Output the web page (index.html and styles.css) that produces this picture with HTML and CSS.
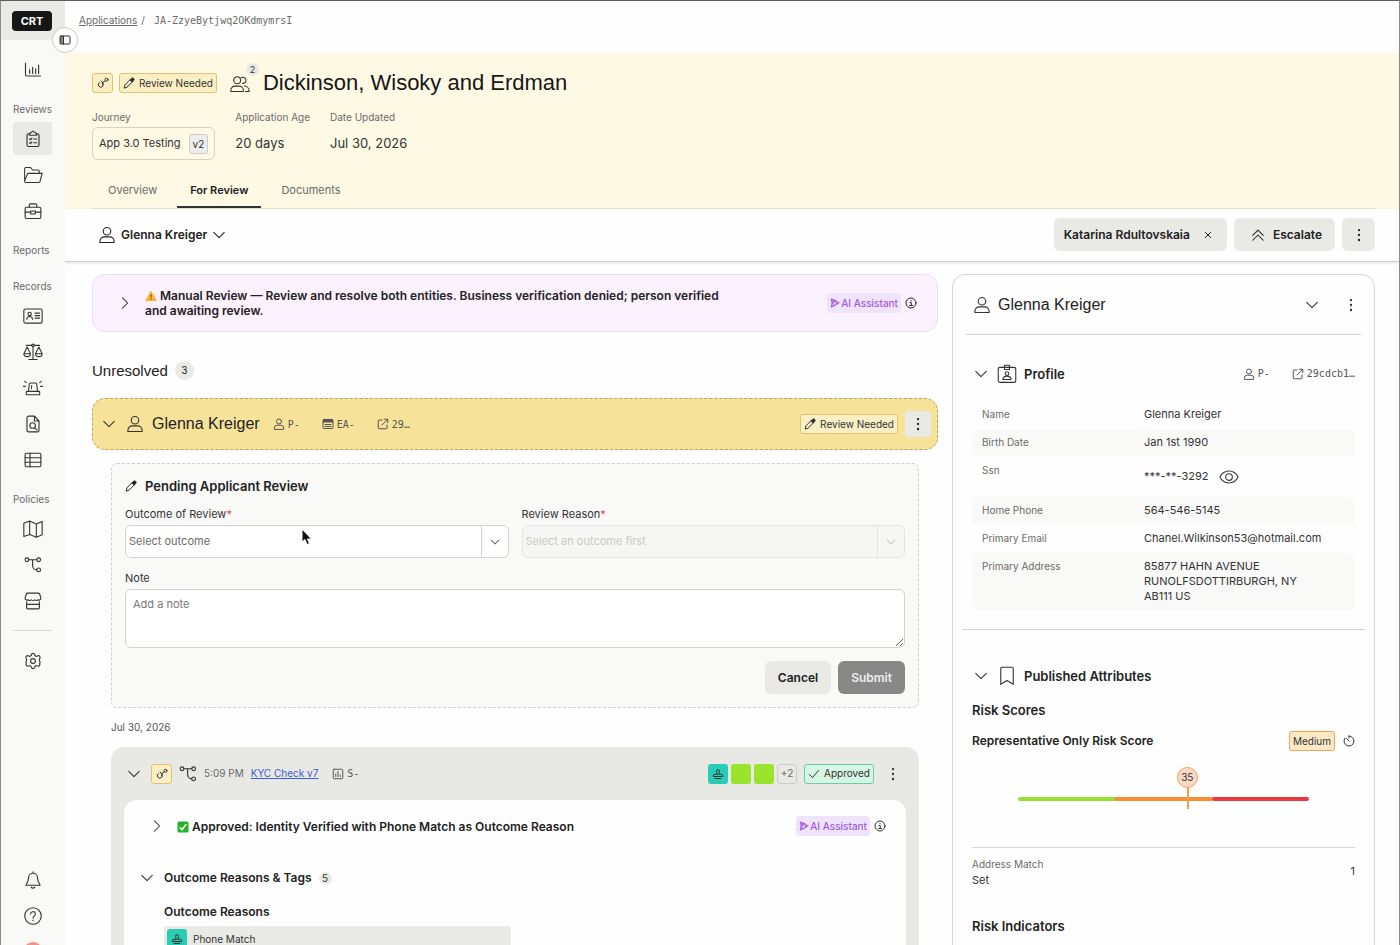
FILE: index.html
```html
<!DOCTYPE html>
<html lang="en">
<head>
  <meta charset="UTF-8" />
  <meta name="viewport" content="width=device-width, initial-scale=1.0"/>
  <title>Dickinson, Wisoky and Erdman</title>
  <link rel="stylesheet" href="styles.css">
</head>
<body>
  <!-- icon sprite -->
  <svg class="sprite" aria-hidden="true">
    <symbol id="i-chart" viewBox="0 0 24 24"><path d="M2 3v15a2 2 0 0 0 2 2h18M7.500 16.500v-5M11.500 16.500v-8M15.500 16.500v-6M19.500 16.500v-11"/></symbol>
    <symbol id="i-clipboard" viewBox="0 0 24 24"><path d="M8 5H6a2 2 0 0 0-2 2v13a2 2 0 0 0 2 2h12a2 2 0 0 0 2-2V7a2 2 0 0 0-2-2h-2M7 7V5l5-3.500L17 5v2zM7.500 12l1 1 2-2M13 12h4M7.500 17l1 1 2-2M13 17h4"/></symbol>
    <symbol id="i-folder" viewBox="0 0 24 24"><path d="M2 19V4.500A1.500 1.500 0 0 1 3.500 3H9l2.500 3H18a1.500 1.500 0 0 1 1.500 1.500V10M2 19l3-7.500A2 2 0 0 1 6.500 10H23l-2.500 9.500a2 2 0 0 1-1.500 1.500H3.500A1.500 1.500 0 0 1 2 19z"/></symbol>
    <symbol id="i-briefcase" viewBox="0 0 24 24"><rect x="1.500" y="7" width="21" height="15" rx="2"/><path d="M7 7V4a1.500 1.500 0 0 1 1.500-1.500h7A1.500 1.500 0 0 1 17 4v3M1.500 13.500H9M15 13.500h7.500M9 12h6v4H9z"/></symbol>
    <symbol id="i-idcard" viewBox="0 0 24 24"><rect x="1" y="3.500" width="22" height="17" rx="2"/><circle cx="8" cy="9.500" r="2"/><path d="M4.500 16c.3-2.500 1.500-3.500 3.500-3.500s3.200 1 3.500 3.500M14.500 8.500H20M14.500 11.500H20M14.500 14.500H20"/></symbol>
    <symbol id="i-scale" viewBox="0 0 24 24"><circle cx="12" cy="4" r="1.500"/><path d="M12 5.500V20.500M7 21h10M4 4h6.500M13.500 4H20M5 6L1 14h8zM19 6l-4 8h8zM1 14a4 3.500 0 0 0 8 0M15 14a4 3.500 0 0 0 8 0"/></symbol>
    <symbol id="i-siren" viewBox="0 0 24 24"><path d="M6.500 16l1-8.500A1.500 1.500 0 0 1 9 6h6a1.500 1.500 0 0 1 1.500 1.500l1 8.500M10.500 9L10 13M5 16h14a1 1 0 0 1 1 1v3H4v-3a1 1 0 0 1 1-1zM.500 10H3M21 10h2.500M2 4l2 1.500M22 4l-2 1.500"/></symbol>
    <symbol id="i-filesearch" viewBox="0 0 24 24"><path d="M14 1.500H6a2 2 0 0 0-2 2v17a2 2 0 0 0 2 2h12a2 2 0 0 0 2-2V8zM14 1.500V8h6M14.200 17.200L17.500 20"/><circle cx="11.500" cy="14" r="3.700"/></symbol>
    <symbol id="i-table" viewBox="0 0 24 24"><rect x="1.500" y="3" width="21" height="18" rx="2"/><path d="M1.500 9h21M1.500 15h21M8 3v18"/></symbol>
    <symbol id="i-map" viewBox="0 0 24 24"><path d="M1 5l7-2.500L16 6l7-3v16l-7 3-8-3.500L1 21zM8 2.500v16M16 6v16"/></symbol>
    <symbol id="i-graph" viewBox="0 0 24 24"><circle cx="4" cy="5" r="2.500"/><circle cx="19.500" cy="5" r="2.500"/><circle cx="19.500" cy="18.500" r="2.500"/><path d="M6.500 5H17M11.500 5v8a5.500 5.500 0 0 0 5.500 5.500"/></symbol>
    <symbol id="i-store" viewBox="0 0 24 24"><path d="M5 1.500h14a2 2 0 0 1 1.800 1.200L22.500 7.500V9a3 3 0 0 1-4 1.500 3.500 3.500 0 0 1-4.300 0 3.500 3.500 0 0 1-4.400 0 3.500 3.500 0 0 1-4.300 0 3 3 0 0 1-4-1.500V7.500L3.200 2.700A2 2 0 0 1 5 1.500zM3.500 13v8a1.500 1.500 0 0 0 1.500 1.500h14a1.500 1.500 0 0 0 1.500-1.500v-8M3.500 16.500h17"/></symbol>
    <symbol id="i-gear" viewBox="0 0 24 24"><circle cx="12" cy="12" r="3.200"/><path d="M9.800 3.500a2.300 2.300 0 0 1 4.400 0 2.300 2.300 0 0 0 3.400 2 2.300 2.300 0 0 1 3.300 3.200c-.8 1.300-.8 1.700 0 3.300.9 1.800.8 2.300 0 3.500a2.300 2.300 0 0 1-3.300 3 2.300 2.300 0 0 0-3.400 2 2.300 2.300 0 0 1-4.400 0 2.300 2.300 0 0 0-3.400-2 2.300 2.300 0 0 1-3.300-3c-.8-1.200-.9-1.700 0-3.500.8-1.600.8-2 0-3.300a2.300 2.300 0 0 1 3.300-3.200 2.300 2.300 0 0 0 3.400-2z"/></symbol>
    <symbol id="i-bell" viewBox="0 0 24 24"><path d="M12 1v2M12 3a6 6 0 0 0-6 6c0 5-1.200 6.500-3.500 10h19c-2.300-3.500-3.500-5-3.500-10a6 6 0 0 0-6-6zM9.500 21.500a3 3 0 0 0 5 0"/></symbol>
    <symbol id="i-help" viewBox="0 0 24 24"><circle cx="12" cy="12" r="11"/><path d="M8.800 9.500a3.200 3.200 0 1 1 4.700 2.800c-1 .6-1.500 1-1.500 2.200M12 17.300v.600"/></symbol>
    <symbol id="i-panel" viewBox="0 0 24 24"><rect x="2" y="4" width="20" height="16" rx="2"/><path d="M9 4v16"/><path class="fill" d="M2 4h7v16H2z" fill-opacity=".6"/></symbol>
    <symbol id="i-user" viewBox="0 0 24 24"><circle cx="12" cy="7" r="5"/><path d="M2.500 22v-1.500a6 6 0 0 1 6-6h7a6 6 0 0 1 6 6V22z"/></symbol>
    <symbol id="i-users" viewBox="0 0 24 24"><circle cx="8.500" cy="7.500" r="4.200"/><path d="M1 21v-1.500a5 5 0 0 1 5-5h5a5 5 0 0 1 5 5V21zM13.500 4.500a3.700 3.700 0 1 1 1.500 6.800M17 14.500a6 6 0 0 1 6 5.500v1h-4.500"/></symbol>
    <symbol id="i-down" viewBox="0 0 24 24"><path d="M3 7.500l9 9 9-9"/></symbol>
    <symbol id="i-right" viewBox="0 0 24 24"><path d="M7.500 3l9 9-9 9"/></symbol>
    <symbol id="i-up2" viewBox="0 0 24 24"><path d="M3 12.500l9-9 9 9M3 21l9-9 9 9"/></symbol>
    <symbol id="i-dots" viewBox="0 0 24 24"><g class="fill"><circle cx="12" cy="3.500" r="2"/><circle cx="12" cy="12" r="2"/><circle cx="12" cy="20.500" r="2"/></g></symbol>
    <symbol id="i-x" viewBox="0 0 24 24"><path d="M4 4l16 16M20 4L4 20"/></symbol>
    <symbol id="i-pencil" viewBox="0 0 24 24"><path d="M2.500 21.500l1.500-6L15.500 4l4.500 4.500L8.500 20z"/><path class="fill" d="M13 6l4.500-4.500a2 2 0 0 1 3 0l2 2a2 2 0 0 1 0 3L18 11z"/></symbol>
    <symbol id="i-link" viewBox="0 0 24 24"><path d="M11 11.500a5 5 0 1 1-6-.5M11 11.500L16 8M8 8l4 3.500-.5 4"/><circle cx="19" cy="5.500" r="3"/></symbol>
    <symbol id="i-info" viewBox="0 0 24 24"><circle cx="12" cy="12" r="10"/><path d="M10 11h2.500v6M9.500 17h5.500M12 6.800v1"/></symbol>
    <symbol id="i-ai" viewBox="0 0 24 24"><path d="M3 2.500c6 1.500 13 4.500 18.500 9C16 15.500 9 20 3 21.500c2.500-6 2.500-13 0-19zM7.500 7v10.500M7 5.500l10 8"/></symbol>
    <symbol id="i-window" viewBox="0 0 24 24"><rect x="2" y="3" width="20" height="18" rx="2"/><path class="fill" d="M2 3h20v6H2z"/><path d="M6 13h12M6 17h12"/></symbol>
    <symbol id="i-external" viewBox="0 0 24 24"><path d="M10 4H4a1.500 1.500 0 0 0-1.500 1.500V20A1.500 1.500 0 0 0 4 21.500h14.500A1.500 1.500 0 0 0 20 20v-6M14.500 2.500h7v7M21.500 2.500L10 14"/></symbol>
    <symbol id="i-bars" viewBox="0 0 24 24"><rect x="2.500" y="2.500" width="19" height="19" rx="2"/><path d="M7.500 17v-5M12 17V7M16.500 17v-3"/></symbol>
    <symbol id="i-stamp" viewBox="0 0 24 24"><path d="M10.500 12.500c0-2-1.500-3.500-1.500-6a3 3 0 1 1 6 0c0 2.500-1.500 4-1.500 6h5a3 3 0 0 1 3 3V17h-19v-1.500a3 3 0 0 1 3-3zM6 21h12"/></symbol>
    <symbol id="i-check" viewBox="0 0 24 24"><path d="M3 13l6 6L21 5"/></symbol>
    <symbol id="i-eye" viewBox="0 0 24 24"><path d="M1 12c5-9.500 17-9.500 22 0-5 9.500-17 9.500-22 0z"/><circle cx="12" cy="12" r="4"/></symbol>
    <symbol id="i-badge" viewBox="0 0 24 24"><rect x="1.500" y="4" width="21" height="18" rx="2"/><path d="M9 6.500V1.500h6v5zM7 18.500c.3-3 2-4 5-4s4.700 1 5 4z"/><circle cx="12" cy="11.500" r="2.200"/></symbol>
    <symbol id="i-bookmark" viewBox="0 0 24 24"><path d="M4.500 22V3A1.500 1.500 0 0 1 6 1.500h12A1.500 1.500 0 0 1 19.500 3v19L12 17.500z"/></symbol>
    <symbol id="i-timer" viewBox="0 0 24 24"><path d="M12 2a10 10 0 1 1-8.500 4.700M12 2v4M7 7l5 5"/></symbol>
  </svg>

  <div class="app">
    <aside class="sidebar">
      <div class="brand"><span class="logo">CRT</span></div>
      <button class="collapse" aria-label="Toggle sidebar"><svg class="icon s12"><use href="#i-panel"/></svg></button>

      <nav class="nav">
        <section>
          <a href="#" aria-label="Dashboard"><svg class="icon s18"><use href="#i-chart"/></svg></a>
        </section>
        <section>
          <h2>Reviews</h2>
          <a href="#" class="active" aria-label="Applications"><svg class="icon s18"><use href="#i-clipboard"/></svg></a>
          <a href="#" aria-label="Cases"><svg class="icon s20"><use href="#i-folder"/></svg></a>
          <a href="#" aria-label="Portfolio"><svg class="icon s18"><use href="#i-briefcase"/></svg></a>
        </section>
        <section class="empty">
          <h2>Reports</h2>
        </section>
        <section>
          <h2>Records</h2>
          <a href="#" aria-label="Entities"><svg class="icon s20"><use href="#i-idcard"/></svg></a>
          <a href="#" aria-label="Decisions"><svg class="icon s20"><use href="#i-scale"/></svg></a>
          <a href="#" aria-label="Alerts"><svg class="icon s20"><use href="#i-siren"/></svg></a>
          <a href="#" aria-label="Searches"><svg class="icon s18"><use href="#i-filesearch"/></svg></a>
          <a href="#" aria-label="Lists"><svg class="icon s18"><use href="#i-table"/></svg></a>
        </section>
        <section>
          <h2>Policies</h2>
          <a href="#" aria-label="Journeys"><svg class="icon s20"><use href="#i-map"/></svg></a>
          <a href="#" aria-label="Workflows"><svg class="icon s18"><use href="#i-graph"/></svg></a>
          <a href="#" aria-label="Marketplace"><svg class="icon s18"><use href="#i-store"/></svg></a>
        </section>
        <hr>
        <section>
          <a href="#" aria-label="Settings"><svg class="icon s18"><use href="#i-gear"/></svg></a>
        </section>
        <section class="bottom">
          <a href="#" aria-label="Notifications"><svg class="icon s18"><use href="#i-bell"/></svg></a>
          <a href="#" aria-label="Help"><svg class="icon s18"><use href="#i-help"/></svg></a>
          <a href="#" aria-label="Account"><span class="avatar"></span></a>
        </section>
      </nav>
    </aside>

    <main class="main">
      <div class="breadcrumbs">
        <a href="#">Applications</a><span>/</span><span class="mono">JA-ZzyeBytjwq2OKdmymrsI</span>
      </div>

      <header class="banner">
        <div class="title-row">
          <span class="badge yellow square"><svg class="icon s12"><use href="#i-link"/></svg></span>
          <span class="badge yellow"><svg class="icon s12"><use href="#i-pencil"/></svg>Review Needed</span>
          <span class="people"><svg class="icon s20"><use href="#i-users"/></svg><span class="people-count">2</span></span>
          <h1>Dickinson, Wisoky and Erdman</h1>
        </div>
        <div class="facts">
          <div class="fact">
            <span class="fact-label">Journey</span>
            <div class="journey">App 3.0 Testing <span class="version">v2</span></div>
          </div>
          <div class="fact">
            <span class="fact-label">Application Age</span>
            <span class="fact-value">20 days</span>
          </div>
          <div class="fact">
            <span class="fact-label">Date Updated</span>
            <span class="fact-value">Jul 30, 2026</span>
          </div>
        </div>
        <nav class="tabs">
          <a href="#">Overview</a>
          <a href="#" class="active">For Review</a>
          <a href="#">Documents</a>
        </nav>
      </header>

      <div class="toolbar">
        <button class="person"><svg class="icon s18"><use href="#i-user"/></svg>Glenna Kreiger<svg class="icon s14"><use href="#i-down"/></svg></button>
        <div class="actions">
          <button class="btn assignee">Katarina Rdultovskaia <svg class="icon s8"><use href="#i-x"/></svg></button>
          <button class="btn escalate"><svg class="icon s14"><use href="#i-up2"/></svg>Escalate</button>
          <button class="btn icon-only" aria-label="More"><svg class="icon s14"><use href="#i-dots"/></svg></button>
        </div>
      </div>

      <div class="content">
        <div class="reviews">
          <div class="ai-card">
            <button class="plain" aria-label="Expand"><svg class="icon s14"><use href="#i-right"/></svg></button>
            <p><svg class="emoji" viewBox="0 0 24 24"><path d="M12 2L23 21.500H1z" fill="#fbb62c" stroke="#f0a020" stroke-linejoin="round"/><path d="M11 9h2l-.5 6h-1zM11 17h2v2h-2z" fill="#222"/></svg> Manual Review — Review and resolve both entities. Business verification denied; person verified and awaiting review.</p>
            <span class="ai-tag"><svg class="icon s10"><use href="#i-ai"/></svg>AI Assistant</span>
            <svg class="icon s12"><use href="#i-info"/></svg>
          </div>

          <h2 class="section-title">Unresolved <span class="count">3</span></h2>

          <div class="entity-bar">
            <button class="plain" aria-label="Collapse"><svg class="icon s14"><use href="#i-down"/></svg></button>
            <svg class="icon s18"><use href="#i-user"/></svg>
            <h3>Glenna Kreiger</h3>
            <div class="ids">
              <span><svg class="icon s12"><use href="#i-user"/></svg>P-</span>
              <span><svg class="icon s12"><use href="#i-window"/></svg>EA-</span>
              <span><svg class="icon s12"><use href="#i-external"/></svg>29…</span>
            </div>
            <span class="badge yellow"><svg class="icon s12"><use href="#i-pencil"/></svg>Review Needed</span>
            <button class="btn small" aria-label="More"><svg class="icon s14"><use href="#i-dots"/></svg></button>
          </div>

          <form class="review-form">
            <h4><svg class="icon s12"><use href="#i-pencil"/></svg>Pending Applicant Review</h4>
            <div class="fields">
              <div class="field">
                <label for="outcome">Outcome of Review<span class="required">*</span></label>
                <div class="select">
                  <select id="outcome"><option>Select outcome</option></select>
                  <span class="select-arrow"><svg class="icon s10"><use href="#i-down"/></svg></span>
                </div>
              </div>
              <div class="field">
                <label for="reason">Review Reason<span class="required">*</span></label>
                <div class="select disabled">
                  <select id="reason" disabled><option>Select an outcome first</option></select>
                  <span class="select-arrow"><svg class="icon s10"><use href="#i-down"/></svg></span>
                </div>
              </div>
            </div>
            <div class="field">
              <label for="note">Note</label>
              <textarea id="note" placeholder="Add a note"></textarea>
            </div>
            <div class="form-buttons">
              <button type="button" class="btn">Cancel</button>
              <button type="submit" class="btn dark">Submit</button>
            </div>
            <svg class="cursor" viewBox="0 0 12 18"><path d="M1 1v13l3-2.500L6 16.500l2.500-1L6.500 11h4z" fill="#111" stroke="#fff"/></svg>
          </form>

          <div class="date">Jul 30, 2026</div>

          <div class="check-card">
            <div class="check-head">
              <button class="plain" aria-label="Collapse"><svg class="icon s14"><use href="#i-down"/></svg></button>
              <span class="badge yellow square"><svg class="icon s12"><use href="#i-link"/></svg></span>
              <svg class="icon s18"><use href="#i-graph"/></svg>
              <span class="time">5:09 PM</span>
              <a href="#">KYC Check v7</a>
              <span class="ids"><span><svg class="icon s12"><use href="#i-bars"/></svg>S-</span></span>
              <div class="tiles">
                <span class="tile teal"><svg class="icon s12"><use href="#i-stamp"/></svg></span>
                <span class="tile lime"></span>
                <span class="tile lime"></span>
                <span class="tile more">+2</span>
              </div>
              <span class="badge green"><svg class="icon s12"><use href="#i-check"/></svg>Approved</span>
              <button class="plain" aria-label="More"><svg class="icon s14"><use href="#i-dots"/></svg></button>
            </div>
            <div class="check-body">
              <div class="summary">
                <button class="plain" aria-label="Expand"><svg class="icon s14"><use href="#i-right"/></svg></button>
                <p><svg class="emoji" viewBox="0 0 24 24"><rect x="1" y="1" width="22" height="22" rx="3" fill="#1db32a"/><path d="M5.500 12.500l4.500 5L18.500 6" fill="none" stroke="#fff" stroke-width="3"/></svg> Approved: Identity Verified with Phone Match as Outcome Reason</p>
                <span class="ai-tag"><svg class="icon s10"><use href="#i-ai"/></svg>AI Assistant</span>
                <svg class="icon s12"><use href="#i-info"/></svg>
              </div>
              <div class="reasons-head">
                <button class="plain" aria-label="Collapse"><svg class="icon s14"><use href="#i-down"/></svg></button>
                <h4>Outcome Reasons &amp; Tags</h4>
                <span class="count tiny">5</span>
              </div>
              <div class="reasons">
                <h5>Outcome Reasons</h5>
                <div class="reason"><span class="tile teal"><svg class="icon s12"><use href="#i-stamp"/></svg></span>Phone Match</div>
              </div>
            </div>
          </div>
        </div>

        <aside class="panel">
          <div class="panel-head">
            <svg class="icon s18"><use href="#i-user"/></svg>
            <h3>Glenna Kreiger</h3>
            <button class="plain" aria-label="Collapse"><svg class="icon s14"><use href="#i-down"/></svg></button>
            <button class="plain" aria-label="More"><svg class="icon s14"><use href="#i-dots"/></svg></button>
          </div>

          <section class="profile">
            <div class="group-head">
              <button class="plain" aria-label="Collapse"><svg class="icon s14"><use href="#i-down"/></svg></button>
              <svg class="icon s20"><use href="#i-badge"/></svg>
              <h4>Profile</h4>
              <div class="ids">
                <span><svg class="icon s12"><use href="#i-user"/></svg>P-</span>
                <span><svg class="icon s12"><use href="#i-external"/></svg>29cdcb1…</span>
              </div>
            </div>
            <dl>
              <div><dt>Name</dt><dd>Glenna Kreiger</dd></div>
              <div><dt>Birth Date</dt><dd>Jan 1st 1990</dd></div>
              <div><dt>Ssn</dt><dd class="ssn">***-**-3292 <button class="plain" aria-label="Reveal"><svg class="icon s20"><use href="#i-eye"/></svg></button></dd></div>
              <div><dt>Home Phone</dt><dd>564-546-5145</dd></div>
              <div><dt>Primary Email</dt><dd>Chanel.Wilkinson53@hotmail.com</dd></div>
              <div><dt>Primary Address</dt><dd>85877 HAHN AVENUE<br>RUNOLFSDOTTIRBURGH, NY<br>AB111 US</dd></div>
            </dl>
          </section>

          <section class="attributes">
            <div class="group-head">
              <button class="plain" aria-label="Collapse"><svg class="icon s14"><use href="#i-down"/></svg></button>
              <svg class="icon s20"><use href="#i-bookmark"/></svg>
              <h4>Published Attributes</h4>
            </div>
            <h4>Risk Scores</h4>
            <div class="score-row">
              <h5>Representative Only Risk Score</h5>
              <span class="badge orange">Medium</span>
              <svg class="icon s12"><use href="#i-timer"/></svg>
            </div>
            <div class="gauge">
              <span class="low"></span><span class="mid"></span><span class="high"></span>
              <div class="needle" style="left: 58%"><b>35</b></div>
            </div>
            <div class="match">
              <div><span class="match-label">Address Match</span>Set</div>
              <span>1</span>
            </div>
            <h4>Risk Indicators</h4>
          </section>
        </aside>
      </div>
    </main>
  </div>
</body>
</html>
```

FILE: styles.css
```css
* {
  box-sizing: border-box;
}

body {
  margin: 0;
  font-family: Inter, "Liberation Sans", sans-serif;
  font-size: 11px;
  line-height: 15px;
  color: #333;
  background: #fefefe;
}

h1, h2, h3, h4, h5, p, dl, dd {
  margin: 0;
}

button, select, textarea {
  font: inherit;
  color: inherit;
}

.sprite {
  display: none;
}

.icon {
  flex: none;
  display: block;
  fill: none;
  stroke: currentColor;
  stroke-width: 1.5;
  stroke-linecap: round;
  stroke-linejoin: round;
}

.fill {
  fill: currentColor;
  stroke: none;
}

.s8 { width: 8px; height: 8px; stroke-width: 3; }
.s10 { width: 10px; height: 10px; stroke-width: 2.5; }
.s12 { width: 12px; height: 12px; stroke-width: 2; }
.s14 { width: 14px; height: 14px; stroke-width: 1.8; }
.s18 { width: 18px; height: 18px; }
.s20 { width: 20px; height: 20px; stroke-width: 1.3; }

.app {
  display: flex;
  height: 100vh;
  overflow: hidden;
  border: 1px solid #8a8a8a;
  border-top-color: #5c5c5c;
  border-bottom: 0;
}

/* sidebar */
.sidebar {
  position: relative;
  flex: none;
  width: 64px;
  display: flex;
  flex-direction: column;
  background: #f9f9f8;
}

.brand {
  height: 39px;
  padding-right: 2px;
  display: flex;
  align-items: center;
  justify-content: center;
  background: #e9e9e6;
}

.logo {
  width: 40px;
  border-radius: 4px;
  background: #161616;
  color: #fff;
  font-size: 11px;
  font-weight: 700;
  line-height: 20px;
  text-align: center;
}

.collapse {
  position: absolute;
  top: 26px;
  right: -13px;
  width: 26px;
  height: 26px;
  padding: 0;
  display: flex;
  align-items: center;
  justify-content: center;
  border: 1px solid #ccc;
  border-radius: 50%;
  background: #fff;
}

.nav {
  flex: 1;
  min-height: 0;
  padding: 13px 13px 0 12px;
  display: flex;
  flex-direction: column;
  gap: 13px;
  overflow: hidden;
}

.nav section {
  display: flex;
  flex-direction: column;
  gap: 3px;
}

.nav .empty {
  padding-bottom: 3px;
}

.nav h2 {
  font-size: 10px;
  font-weight: 400;
  line-height: 20px;
  color: #6b6b68;
}

.nav a {
  height: 33px;
  display: flex;
  align-items: center;
  justify-content: center;
  border-radius: 3px;
  color: #333;
}

.nav a.active {
  background: #e9e9e6;
}

.nav hr {
  width: 100%;
  margin: 0;
  border: 0;
  border-top: 1px solid #d8d8d5;
}

.nav .bottom {
  margin: auto 0 -23px;
}

.avatar {
  width: 20px;
  height: 20px;
  border-radius: 50%;
  background: #f2928d;
}

/* header */
.main {
  flex: 1;
  min-width: 0;
}

.breadcrumbs {
  height: 52px;
  padding: 12px 14px;
  display: flex;
  gap: 4px;
  font-size: 10px;
  color: #6b6b68;
}

.breadcrumbs a {
  color: inherit;
}

.mono {
  margin-left: 5px;
  font-family: "DejaVu Sans Mono", monospace;
}

.banner {
  padding: 15px 24px 0 27px;
  background: #fef9e5;
}

.title-row {
  height: 30px;
  display: flex;
  align-items: center;
}

.title-row .badge {
  margin-right: 6px;
}

.badge {
  height: 20px;
  padding: 0 3px;
  display: inline-flex;
  align-items: center;
  justify-content: center;
  gap: 4px;
  border: 1px solid #e0c36a;
  border-radius: 3px;
  font-size: 10px;
  white-space: nowrap;
}

.badge.yellow { background: #fbefc5; }
.badge.green { background: #d5f5e6; border-color: #74c9a5; }
.badge.orange { background: #fbe9c5; border-color: #f7a25a; }

.badge.square {
  width: 21px;
}

.people {
  position: relative;
  margin: 2px 13px 0 7px;
}

.people-count {
  position: absolute;
  top: -11px;
  left: 16px;
  width: 13px;
  border-radius: 50%;
  background: #e9e9e6;
  font-size: 9px;
  line-height: 13px;
  text-align: center;
}

h1 {
  font-family: "Liberation Sans", sans-serif;
  font-size: 22px;
  font-weight: 400;
  line-height: 30px;
  color: #161616;
}

.facts {
  margin-top: 12px;
  display: flex;
  gap: 20px;
}

.fact {
  display: flex;
  flex-direction: column;
  gap: 2px;
}

.fact-label {
  font-size: 10px;
  color: #6b6b68;
}

.fact-value {
  font-size: 13px;
  line-height: 33px;
}

.journey {
  height: 33px;
  padding: 0 6px;
  display: flex;
  align-items: center;
  gap: 8px;
  border: 1px solid #d6d2c2;
  border-radius: 6px;
}

.version {
  padding: 0 3px;
  border: 1px solid #ccc;
  border-radius: 3px;
  background: #ececea;
  font-size: 10px;
  line-height: 18px;
}

.tabs {
  margin-top: 13px;
  padding: 0 3px;
  display: flex;
  gap: 7px;
  border-bottom: 1px solid #eae4d2;
}

.tabs a {
  padding: 10px 13px 8px;
  border-bottom: 2px solid transparent;
  color: #6b6b68;
  line-height: 15px;
  text-decoration: none;
}

.tabs a.active {
  border-color: #333;
  color: #222;
  font-weight: 600;
}

.toolbar {
  height: 53px;
  padding: 0 24px 1px 33px;
  display: flex;
  align-items: center;
  justify-content: space-between;
  border-bottom: 1px solid #ccc;
  box-shadow: 0 1px 3px rgba(0, 0, 0, 0.12);
}

.person {
  padding: 0;
  display: flex;
  align-items: center;
  gap: 5px;
  border: 0;
  background: none;
  font-size: 12px;
  font-weight: 600;
  color: #222;
}

.actions {
  display: flex;
  gap: 7px;
}

.btn {
  height: 33px;
  padding: 0 13px;
  display: flex;
  align-items: center;
  justify-content: center;
  border: 0;
  border-radius: 6px;
  background: #e9e9e6;
  color: #222;
  font-size: 12px;
  font-weight: 600;
}

.btn.assignee { padding: 0 15px 0 10px; gap: 14px; }
.btn.escalate { gap: 8px; padding: 0 13px 0 17px; }
.btn.icon-only { width: 33px; padding: 0; }
.btn.small { width: 26px; height: 26px; padding: 0; border-radius: 3px; }
.btn.dark { background: #888886; color: #eee; }

.plain {
  padding: 0;
  border: 0;
  background: none;
}

/* content */
.content {
  padding: 12px 24px 0 27px;
  display: grid;
  grid-template-columns: minmax(0, 2fr) minmax(0, 1fr);
  gap: 14px;
}

.ai-card {
  padding: 13px 20px 13px 25px;
  display: flex;
  align-items: center;
  border: 1px solid #eadcf8;
  border-radius: 13px;
  background: #fcf1ff;
  color: #222;
  font-size: 12px;
  font-weight: 600;
}

.ai-card p {
  max-width: 590px;
  margin: 0 auto 0 13px;
}

.emoji {
  width: 12px;
  height: 12px;
  vertical-align: -2px;
}

.ai-tag {
  margin-right: 4px;
  padding: 0 3px;
  display: flex;
  align-items: center;
  gap: 1px;
  border-radius: 3px;
  background: #f0e4fd;
  color: #a25be0;
  font-size: 10px;
  font-weight: 500;
  line-height: 20px;
  white-space: nowrap;
}

.section-title {
  margin: 28px 0 17px;
  display: flex;
  align-items: center;
  gap: 7px;
  font-family: "Liberation Sans", sans-serif;
  font-size: 15px;
  font-weight: 400;
  line-height: 21px;
  color: #222;
}

.count {
  width: 19px;
  border-radius: 50%;
  background: #e9e9e6;
  font-family: Inter, sans-serif;
  font-size: 10px;
  line-height: 19px;
  text-align: center;
}

.count.tiny {
  width: 13px;
  line-height: 13px;
}

.entity-bar {
  height: 52px;
  padding: 0 6px 0 9px;
  display: flex;
  align-items: center;
  border: 1px dashed #b5a666;
  border-radius: 13px;
  background: #f6e399;
}

.entity-bar .s18 {
  margin: 0 8px 0 10px;
}

h3 {
  font-family: "Liberation Sans", sans-serif;
  font-size: 16px;
  font-weight: 400;
  line-height: 20px;
  color: #222;
}

.ids {
  display: flex;
  gap: 22px;
  font-family: "DejaVu Sans Mono", monospace;
  font-size: 10px;
  color: #555;
}

.ids span {
  display: flex;
  align-items: center;
  gap: 3px;
}

.entity-bar .ids {
  margin: 0 auto 0 13px;
}

.entity-bar .btn {
  margin-left: 7px;
}

.review-form {
  position: relative;
  margin: 13px 19px 0;
  padding: 13px;
  border: 1px dashed #cfcfcb;
  border-radius: 6px;
  background: #f9f9f8;
}

h4 {
  font-size: 13px;
  font-weight: 600;
  line-height: 18px;
  color: #222;
}

.review-form h4 {
  display: flex;
  align-items: center;
  gap: 8px;
}

.fields {
  margin: 12px 0 13px;
  display: grid;
  grid-template-columns: 1fr 1fr;
  gap: 13px;
}

.field {
  display: flex;
  flex-direction: column;
  gap: 3px;
}

.required {
  color: #e5484d;
}

.select {
  position: relative;
  color: #6b6b68;
}

.select select {
  width: 100%;
  height: 33px;
  padding: 0 30px 0 3px;
  display: block;
  appearance: none;
  border: 1px solid #d2d2ce;
  border-radius: 6px;
  background: #fff;
}

.select-arrow {
  position: absolute;
  top: 1px;
  right: 1px;
  bottom: 1px;
  width: 27px;
  display: flex;
  align-items: center;
  justify-content: center;
  border-left: 1px solid #d2d2ce;
  pointer-events: none;
}

.select.disabled {
  color: #c9c9c6;
}

.select.disabled select {
  border-color: #e4e4e1;
  background: #f6f6f5;
  opacity: 1;
}

.select.disabled .select-arrow {
  border-color: #e4e4e1;
}

textarea {
  width: 100%;
  height: 59px;
  padding: 7px;
  display: block;
  border: 1px solid #d2d2ce;
  border-radius: 6px;
  background: #fff;
}

textarea::placeholder {
  color: #777;
}

.form-buttons {
  margin-top: 13px;
  display: flex;
  justify-content: flex-end;
  gap: 7px;
}

.cursor {
  position: absolute;
  top: 64px;
  left: 189px;
  width: 12px;
  height: 18px;
}

.date {
  margin: 12px 19px;
  font-size: 10px;
  color: #555;
}

.check-card {
  margin: 0 19px;
  padding: 0 13px;
  border-radius: 13px;
  background: #e8e8e5;
}

.check-head {
  height: 53px;
  padding: 0 6px 0 3px;
  display: flex;
  align-items: center;
  gap: 7px;
}

.check-head .square {
  margin-left: 3px;
}

.check-head a {
  color: #3d5fd0;
}

.check-head .time,
.check-head a {
  font-size: 10px;
}

.check-head .time {
  color: #6b6b68;
}

.check-head .ids {
  margin-left: 7px;
}

.check-head .plain:last-child {
  margin-left: 5px;
}

.tiles {
  margin-left: auto;
  display: flex;
  gap: 3px;
}

.tile {
  width: 20px;
  height: 20px;
  display: flex;
  align-items: center;
  justify-content: center;
  border-radius: 3px;
}

.teal { background: #2accb6; }
.lime { background: #9be42e; }
.more { border: 1px solid #ccc; font-size: 10px; color: #6b6b68; }

.check-body {
  height: 400px;
  padding: 16px 20px 0 16px;
  border-radius: 13px 13px 0 0;
  background: #fefefe;
}

.summary {
  padding-left: 10px;
  display: flex;
  align-items: center;
}

.summary p {
  margin: 0 auto 0 13px;
  color: #222;
  font-size: 12px;
  font-weight: 600;
}

.reasons-head {
  margin: 33px 0 16px;
  display: flex;
  align-items: center;
}

.reasons-head h4 {
  margin: 0 7px 0 10px;
  font-size: 12px;
}

h5 {
  font-size: 12px;
  font-weight: 600;
  line-height: 18px;
  color: #222;
}

.reasons {
  padding-left: 24px;
}

.reason {
  width: 48%;
  margin-top: 5px;
  padding: 3px;
  display: flex;
  align-items: center;
  gap: 6px;
  border-radius: 3px;
  background: #e9e9e6;
  font-size: 10px;
}

/* right panel */
.panel {
  height: 900px;
  border: 1px solid #d6d6d2;
  border-radius: 13px;
}

.panel-head {
  height: 60px;
  margin: 0 13px;
  padding: 0 3px 0 7px;
  display: flex;
  align-items: center;
  border-bottom: 1px solid #d2d2ce;
}

.panel-head h3 {
  margin: 0 auto 0 7px;
}

.panel-head .plain {
  margin-left: 25px;
}

.profile {
  margin: 0 9px;
  padding: 25px 10px 18px;
  border-bottom: 1px solid #d2d2ce;
}

.group-head {
  height: 27px;
  padding-left: 2px;
  display: flex;
  align-items: center;
}

.group-head .s20 {
  margin: 0 7px 0 9px;
}

.group-head .ids {
  margin-left: auto;
}

dl {
  margin-top: 14px;
}

dl div {
  padding: 6px 10px 7px;
  display: grid;
  grid-template-columns: 162px 1fr;
  border-radius: 6px;
}

dl div:nth-child(even) {
  background: #f9f9f8;
}

dt {
  font-size: 10px;
  color: #6b6b68;
}

.ssn {
  height: 27px;
  display: flex;
  align-items: center;
  gap: 10px;
}

.attributes {
  padding: 32px 19px;
}

.attributes > h4 {
  margin-top: 12px;
}

.score-row {
  margin-top: 12px;
  display: flex;
  align-items: center;
  gap: 8px;
}

.score-row h5 {
  margin-right: auto;
}

.gauge {
  position: relative;
  margin: 46px;
  display: grid;
  grid-template-columns: 1fr 1fr 1fr;
}

.gauge span { height: 4px; }
.gauge .low { background: #97df33; border-radius: 2px 0 0 2px; }
.gauge .mid { background: #fa8d34; }
.gauge .high { background: #e9393f; border-radius: 2px; }

.needle {
  position: absolute;
  top: -30px;
  width: 2px;
  height: 42px;
  background: #f5a04d;
}

.needle b {
  position: absolute;
  left: -10px;
  width: 21px;
  border: 1px solid #f7a25a;
  border-radius: 50%;
  background: #fad9c4;
  font-size: 10px;
  font-weight: 400;
  line-height: 19px;
  text-align: center;
}

.match {
  padding: 7px 0 9px;
  display: flex;
  align-items: center;
  justify-content: space-between;
  border-top: 1px solid #d8d8d5;
}

.match-label {
  display: block;
  font-size: 10px;
  line-height: 18px;
  color: #6b6b68;
}

.match + h4 {
  margin-top: 20px;
}
```
